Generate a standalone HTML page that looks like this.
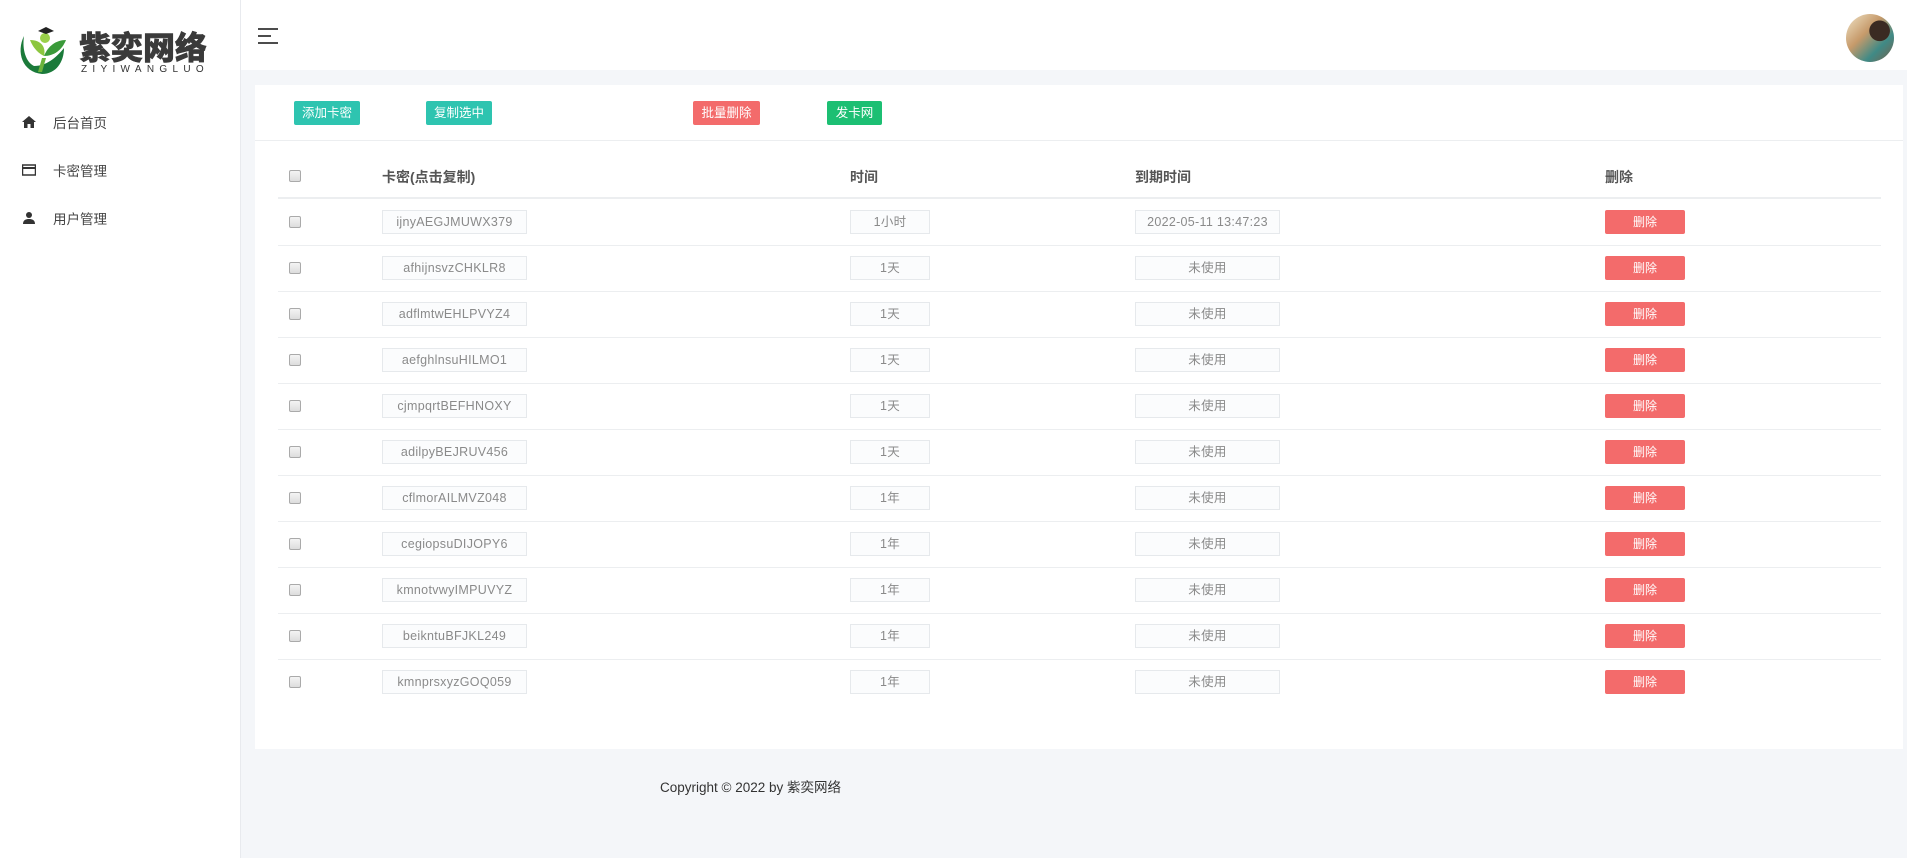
<!DOCTYPE html>
<html><head><meta charset="utf-8"><style>
*{margin:0;padding:0;box-sizing:border-box}
body{width:1907px;height:858px;background:#f4f6f9;font-family:"Liberation Sans","Noto Sans CJK SC",sans-serif;position:relative;overflow:hidden;color:#333}
.abs{position:absolute}
#side{left:0;top:0;width:241px;height:858px;background:#fff;border-right:1px solid #e8eaee}
#head{left:241px;top:0;width:1666px;height:70px;background:#fff}
.nav{left:22px;font-size:13.5px;color:#444;display:flex;align-items:center}
.nav svg{margin-right:17px}
#card{left:255px;top:85px;width:1648px;height:664px;background:#fff}
.btn{height:24px;top:101px;color:#fff;font-size:12.5px;line-height:24px;text-align:center;border-radius:2px}
.teal{background:#2ec4b0}.red{background:#f36b6b}.green{background:#1cbf73}
.line{left:278px;width:1603px;height:1px;background:#eceef0}
.th{top:167px;font-size:14px;font-weight:bold;color:#555}
.cb{left:289px;width:12px;height:12px;border:1px solid #aaa;border-radius:2px;background:linear-gradient(#f4f4f4,#ddd)}
.in{height:24px;border:1px solid #e6e9ec;background:#fbfcfd;font-size:12.5px;color:#8a8a8a;text-align:center;line-height:22px;letter-spacing:0.3px}
.del{left:1605px;width:80px;height:24px;background:#f36b6b;color:#fff;font-size:12px;text-align:center;line-height:24px;border-radius:2px}
</style></head><body>
<div id="side" class="abs">
 <svg class="abs" style="left:16px;top:22px" width="56" height="56" viewBox="0 0 56 56">
  <path d="M8 14 C0 30 6 50 26 52 C40 52 48 40 48 26 C40 36 30 44 18 44 C10 40 6 28 8 14Z" fill="#1b7a3a"/>
  <path d="M14 18 C18 28 24 32 28 34 C30 26 26 18 14 18Z" fill="#8cc63f"/>
  <path d="M28 34 C32 24 40 18 50 18 C46 28 38 34 28 34Z" fill="#3a9a3a"/>
  <path d="M26 36 L30 36 L26 50 L22 50Z" fill="#6bb33a"/>
  <circle cx="29" cy="16" r="5" fill="#9ad04a"/>
  <path d="M22 9 L30 5 L38 9 L30 12Z" fill="#222"/>
 </svg>
 <div class="abs" style="left:79px;top:23px;font-size:32px;font-weight:900;color:#3a3a3a;font-family:'Noto Sans CJK SC',sans-serif;letter-spacing:0px;-webkit-text-stroke:0.6px #3a3a3a">紫奕网络</div>
 <div class="abs" style="left:81px;top:64px;font-size:10px;color:#333;letter-spacing:5.3px">ZIYIWANGLUO</div>
 <div class="abs nav" style="top:112px"><svg width="14" height="14" viewBox="0 0 14 14"><path d="M7 1 L0 7 H2 V13 H5.5 V9 H8.5 V13 H12 V7 H14Z" fill="#333"/></svg>后台首页</div>
 <div class="abs nav" style="top:160px"><svg width="14" height="14" viewBox="0 0 14 14"><rect x="0.5" y="2" width="13" height="10" fill="none" stroke="#333" stroke-width="1.5"/><rect x="0.5" y="4" width="13" height="2" fill="#333"/></svg>卡密管理</div>
 <div class="abs nav" style="top:208px"><svg width="14" height="14" viewBox="0 0 14 14"><circle cx="7" cy="4" r="3" fill="#333"/><path d="M1 13 C1 9 4 8 7 8 C10 8 13 9 13 13Z" fill="#333"/></svg>用户管理</div>
</div>
<div id="head" class="abs">
 <svg class="abs" style="left:17px;top:28px" width="22" height="16" viewBox="0 0 22 16"><path d="M0 1H20M0 8H13M0 15H20" stroke="#333" stroke-width="1.8"/></svg>
 <div class="abs" style="left:1605px;top:14px;width:48px;height:48px;border-radius:50%;background:radial-gradient(circle at 70% 35%,#3a2a22 0 22%,transparent 23%),linear-gradient(135deg,#f0e4c8 0%,#c69a6a 40%,#3f8a86 70%,#7a5f48 100%)"></div>
</div>
<div id="card" class="abs"></div>
<div class="abs btn teal" style="left:294px;width:66px">添加卡密</div>
<div class="abs btn teal" style="left:426px;width:66px">复制选中</div>
<div class="abs btn red" style="left:693px;width:67px">批量删除</div>
<div class="abs btn green" style="left:827px;width:55px">发卡网</div>
<div class="abs line" style="left:255px;width:1648px;top:140px"></div>
<div class="abs cb" style="top:170px"></div>
<div class="abs th" style="left:382px">卡密(点击复制)</div>
<div class="abs th" style="left:850px">时间</div>
<div class="abs th" style="left:1135px">到期时间</div>
<div class="abs th" style="left:1605px">删除</div>
<div class="abs line" style="top:197px;height:2px"></div>
<div id="rows"></div>
<script>
var d=[["ijnyAEGJMUWX379","1小时","2022-05-11 13:47:23"],["afhijnsvzCHKLR8","1天"],["adflmtwEHLPVYZ4","1天"],["aefghlnsuHILMO1","1天"],["cjmpqrtBEFHNOXY","1天"],["adilpyBEJRUV456","1天"],["cflmorAILMVZ048","1年"],["cegiopsuDIJOPY6","1年"],["kmnotvwyIMPUVYZ","1年"],["beikntuBFJKL249","1年"],["kmnprsxyzGOQ059","1年"]];
var h="";
d.forEach(function(r,i){var t=210+46*i;
h+='<div class="abs cb" style="top:'+(t+6)+'px"></div>';
h+='<div class="abs in" style="left:382px;width:145px;top:'+t+'px">'+r[0]+'</div>';
h+='<div class="abs in" style="left:850px;width:80px;top:'+t+'px">'+r[1]+'</div>';
h+='<div class="abs in" style="left:1135px;width:145px;top:'+t+'px">'+(r[2]||'未使用')+'</div>';
h+='<div class="abs del" style="top:'+t+'px">删除</div>';
if(i<10)h+='<div class="abs line" style="top:'+(t+35)+'px"></div>';});
document.getElementById('rows').innerHTML=h;
</script>
<div class="abs" style="left:660px;top:776px;font-size:13.5px;color:#333">Copyright © 2022 by 紫奕网络</div>
</body></html>
